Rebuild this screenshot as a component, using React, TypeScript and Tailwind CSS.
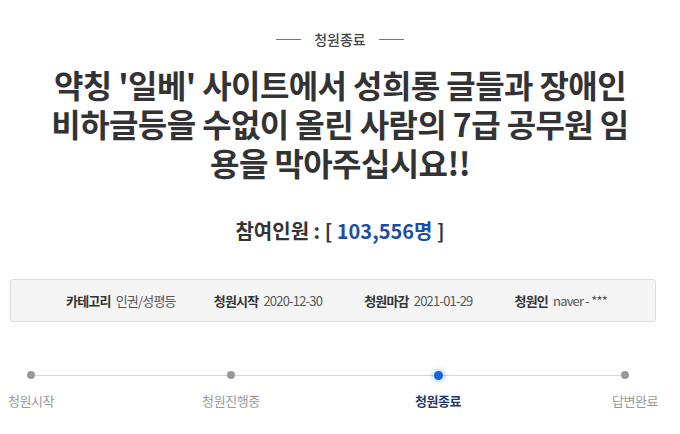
import React from "react";

const font = { fontFamily: '"Noto Sans CJK KR", "Noto Sans", sans-serif' };

const infoItems = [
  { label: "카테고리", value: "인권/성평등", ml: "ml-[55px]" },
  { label: "청원시작", value: "2020-12-30", ml: "ml-[38px]" },
  { label: "청원마감", value: "2021-01-29", ml: "ml-[42px]" },
  { label: "청원인", value: "naver - ***", ml: "ml-[42px]" },
];

const steps = [
  { label: "청원시작", active: false },
  { label: "청원진행중", active: false },
  { label: "청원종료", active: true },
  { label: "답변완료", active: false },
];

const App = () => {
  return (
    <div className="w-[680px] h-[434px] bg-white overflow-hidden text-[#333]" style={font}>
      <div className="flex justify-center items-center gap-[13px] pt-[28px]">
        <span className="w-[25px] h-px bg-[#777]" />
        <span className="text-[14px] font-medium text-[#444] leading-[22px]">청원종료</span>
        <span className="w-[25px] h-px bg-[#777]" />
      </div>

      <h1 className="mx-auto mt-[15px] w-[605px] text-center text-[32px] font-bold leading-[39px] tracking-[-0.6px] text-[#333]">
        약칭 '일베' 사이트에서 성희롱 글들과 장애인 비하글등을 수없이 올린 사람의 7급 공무원 임용을 막아주십시요!!
      </h1>

      <div className="mt-[34px] text-center text-[20px] font-bold leading-[30px] text-[#333]">
        참여인원 : [ <span className="text-[#1c4fa3]">103,556명</span> ]
      </div>

      <div className="mx-[10px] mt-[33px] w-[646px] h-[43px] flex items-center rounded-[3px] border border-[#ddd] bg-[#f5f5f5] text-[13px] tracking-[-0.8px]">
        {infoItems.map((it) => (
          <div key={it.label} className={`flex items-center ${it.ml}`}>
            <span className="font-bold text-[#333]">{it.label}</span>
            <span className="ml-[5px] text-[#555]">{it.value}</span>
          </div>
        ))}
      </div>

      <div className="relative mt-[43px] h-[50px] w-[680px]">
        <div className="absolute left-[30px] top-[10px] w-[596px] h-px bg-[#d6d6d6]" />
        <div className="relative flex">
          {steps.map((s, i) => (
            <div
              key={s.label}
              className={`flex flex-col items-center ${
                i === 0 ? "ml-[1px] w-[60px]" : i === 1 ? "ml-[139px] w-[62px]" : i === 2 ? "ml-[146px] w-[60px]" : "ml-[137px] w-[60px]"
              }`}
            >
              <div className={`h-[20px] flex items-center ${i === 3 ? "mr-[20px]" : ""}`}>
                {s.active ? (
                  <span className="w-[9px] h-[9px] rounded-full bg-[#1466d6] shadow-[0_0_4px_2px_rgba(60,140,240,0.35)]" />
                ) : (
                  <span className="w-[8px] h-[8px] rounded-full bg-[#999]" />
                )}
              </div>
              <span
                className={`mt-[6px] text-[13px] leading-[20px] tracking-[-0.4px] ${
                  s.active ? "font-bold text-[#1e3a6b]" : "text-[#999]"
                }`}
              >
                {s.label}
              </span>
            </div>
          ))}
        </div>
      </div>
    </div>
  );
};

export default App;
